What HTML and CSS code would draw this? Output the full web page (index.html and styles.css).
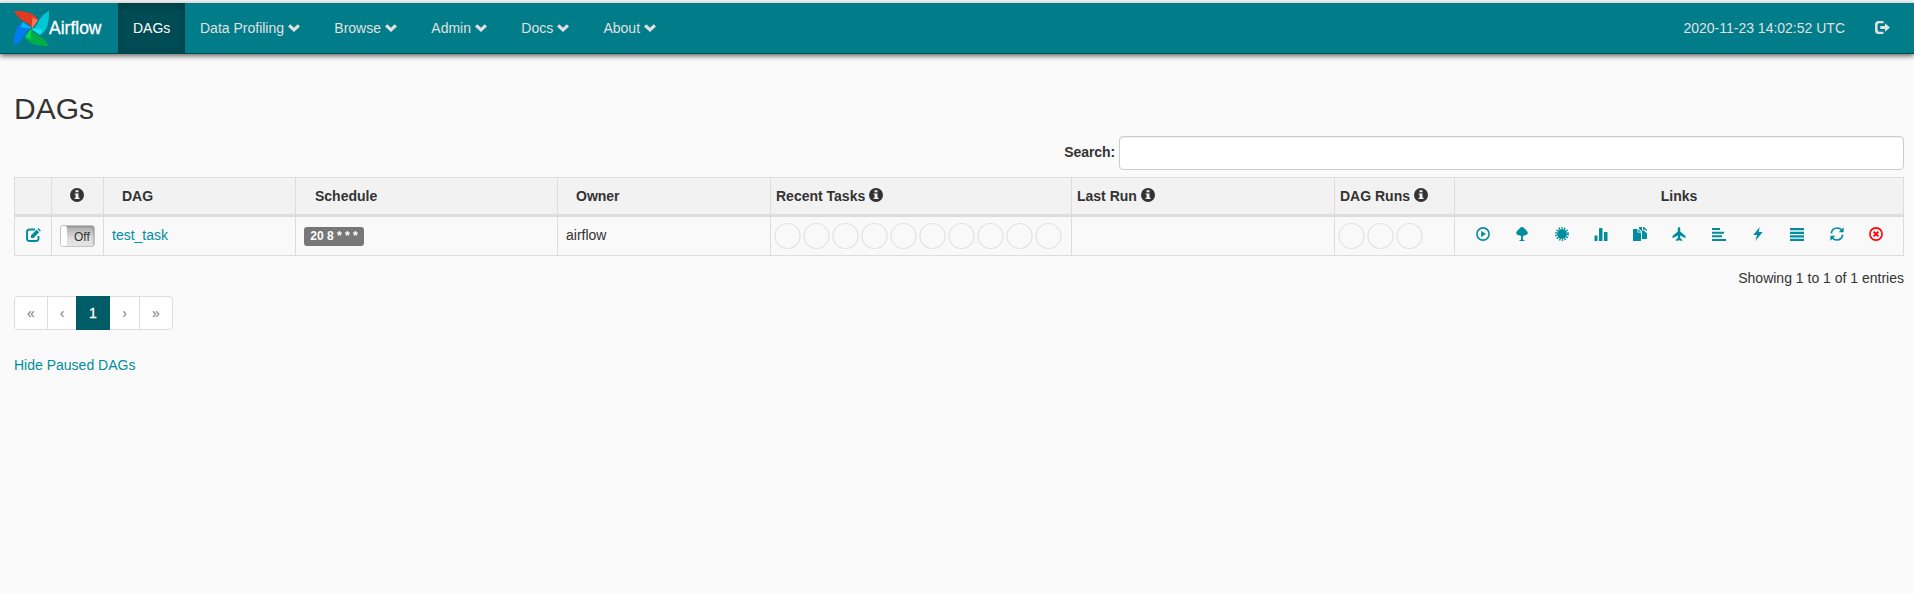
FILE: index.html
```html
<!DOCTYPE html>
<html lang="en">
<head>
<meta charset="utf-8">
<title>Airflow - DAGs</title>
<link rel="stylesheet" href="styles.css">
</head>
<body>
<svg class="defs" width="0" height="0" aria-hidden="true">
  <symbol id="chev" viewBox="0 0 12 8"><path d="M2.300.3 6 3.800 9.700.3 12 2.500 6 8 0 2.500z"/></symbol>
  <symbol id="info" viewBox="0 0 14 14"><path fill-rule="evenodd" d="M7 0a7 7 0 1 1 0 14A7 7 0 0 1 7 0zM5.500 2.200v2h3v-2zM4.600 5.500v1h1v3.300h-1v1.200h5V9.800H8.500V5.500z"/></symbol>
</svg>

<nav class="navbar">
  <a class="brand">
    <svg class="logo" viewBox="0 0 35 35">
      <path fill="#e43921" d="M0 0C9 0 19 0 24 9L18 17.500C16 10 7 13 0 0z"/>
      <path fill="#ff7557" d="M18.500 6.500 24 9 18 17.500C17.300 14.500 18.500 11 18.500 6.500z"/>
      <g transform="rotate(90 17.500 17.500)"><path fill="#00c7d4" d="M0 0C9 0 19 0 24 9L18 17.500C16 10 7 13 0 0z"/><path fill="#11e1ee" d="M18.500 6.500 24 9 18 17.500C17.300 14.500 18.500 11 18.500 6.500z"/></g>
      <g transform="rotate(180 17.500 17.500)"><path fill="#00ad46" d="M0 0C9 0 19 0 24 9L18 17.500C16 10 7 13 0 0z"/><path fill="#04d659" d="M18.500 6.500 24 9 18 17.500C17.300 14.500 18.500 11 18.500 6.500z"/></g>
      <g transform="rotate(270 17.500 17.500)"><path fill="#017cee" d="M0 0C9 0 19 0 24 9L18 17.500C16 10 7 13 0 0z"/><path fill="#0cb6ff" d="M18.500 6.500 24 9 18 17.500C17.300 14.500 18.500 11 18.500 6.500z"/></g>
    </svg>
    <span>Airflow</span>
  </a>
  <ul class="menu">
    <li class="active">DAGs</li>
    <li class="drop">Data Profiling <svg class="chev"><use href="#chev"/></svg></li>
    <li class="drop">Browse <svg class="chev"><use href="#chev"/></svg></li>
    <li class="drop">Admin <svg class="chev"><use href="#chev"/></svg></li>
    <li class="drop">Docs <svg class="chev"><use href="#chev"/></svg></li>
    <li class="drop">About <svg class="chev"><use href="#chev"/></svg></li>
  </ul>
  <div class="clock">2020-11-23 14:02:52 UTC</div>
  <svg class="logout" viewBox="0 0 15 13"><path d="M8.500 0v2.300H4.200Q2.600 2.300 2.600 4v5q0 1.700 1.600 1.700h4.300V13H3.500Q0 13 0 9.500v-6Q0 0 3.500 0zM10 2.300l5 4.200-5 4.200V8H5.300V5H10z"/></svg>
</nav>

<main class="page">
  <h2 class="title">DAGs</h2>
  <label class="search"><span>Search:</span><input type="search"></label>

  <table class="dags">
    <colgroup><col class="c1"><col class="c2"><col class="c3"><col class="c4"><col class="c5"><col class="c6"><col class="c7"><col class="c8"><col class="c9"></colgroup>
    <thead>
      <tr>
        <th></th>
        <th class="center"><svg class="info"><use href="#info"/></svg></th>
        <th class="sort">DAG</th>
        <th class="sort">Schedule</th>
        <th class="sort">Owner</th>
        <th>Recent Tasks <svg class="info"><use href="#info"/></svg></th>
        <th>Last Run <svg class="info"><use href="#info"/></svg></th>
        <th>DAG Runs <svg class="info"><use href="#info"/></svg></th>
        <th class="center">Links</th>
      </tr>
    </thead>
    <tbody>
      <tr>
        <td><svg class="edit" viewBox="0 0 15 14"><path d="M9 1.500H3.500Q1 1.500 1 4v6.500Q1 13 3.500 13H10q2.500 0 2.500-2.500V8" fill="none" stroke="currentColor" stroke-width="1.900"/><path d="M5 10V7.300L10.600 1.700l2.500 2.500L7.600 10zM11.400 1l1-1 2.500 2.500-1 1z"/></svg></td>
        <td><div class="toggle"><span class="knob"></span><span>Off</span></div></td>
        <td><a class="text">test_task</a></td>
        <td><span class="label">20 8 * * *</span></td>
        <td><span class="text">airflow</span></td>
        <td class="dots"><svg width="290" height="28"><circle cx="14.500" cy="14" r="12.500"/><circle cx="43.500" cy="14" r="12.500"/><circle cx="72.500" cy="14" r="12.500"/><circle cx="101.500" cy="14" r="12.500"/><circle cx="130.500" cy="14" r="12.500"/><circle cx="159.500" cy="14" r="12.500"/><circle cx="188.500" cy="14" r="12.500"/><circle cx="217.500" cy="14" r="12.500"/><circle cx="246.500" cy="14" r="12.500"/><circle cx="275.500" cy="14" r="12.500"/></svg></td>
        <td></td>
        <td class="dots"><svg width="86" height="28"><circle cx="14.500" cy="14" r="12.500"/><circle cx="43.500" cy="14" r="12.500"/><circle cx="72.500" cy="14" r="12.500"/></svg></td>
        <td>
          <div class="links">
            <svg viewBox="0 0 14 14"><circle cx="7" cy="7" r="6.100" fill="none" stroke="currentColor" stroke-width="1.600"/><path d="M5.200 4 10 7l-4.800 3z"/></svg>
            <svg viewBox="0 0 14 14"><path d="M7 0c1.600 0 2.600 1 2.600 2.200 1.300 0 2 .8 1.900 1.800C12.600 4.400 13 5.300 12.700 6.300 12.300 7.700 11 8.500 9.500 8.200 9 8.900 8.400 9 7.900 9v3.600l1.600.6v.8h-5v-.8l1.600-.6V9c-.6 0-1.200-.2-1.600-.8C3 8.500 1.700 7.700 1.300 6.300 1 5.300 1.400 4.400 2.500 4c-.1-1 .6-1.800 1.900-1.800C4.400 1 5.400 0 7 0z"/></svg>
            <svg viewBox="0 0 14 14"><circle cx="7" cy="7" r="4.800"/><circle cx="7" cy="7" r="5.700" fill="none" stroke="currentColor" stroke-width="2.600" stroke-dasharray="1.250 1.308"/></svg>
            <svg viewBox="0 0 14 14"><path d="M.5 14V9q0-.5.5-.5h2q.5 0 .5.500v5zM5 14V2q0-1 1-1h1.500q1 0 1 1v12zM10 14V5.500q0-.5.5-.5h2.500q.5 0 .5.500V14z"/></svg>
            <svg viewBox="0 0 14 14"><path d="M0 2h4.500v3.500H8V14H0zM5.300 2 8 4.800H5.300zM6 0h3v3.500h2L14 6.500V12H9V4.500L6 1.500zM10 0h1l3 2.800V4.500l-1.500-1.700H10z"/></svg>
            <svg viewBox="0 0 14 14"><path d="M7 0c.8 0 1.200 1 1.200 2v2.600L13.500 9v2.200L8.200 8.600V11l2 1.700V14L7 13.200 3.800 14v-1.300l2-1.700V8.600L.5 11.200V9l5.300-4.400V2C5.800 1 6.200 0 7 0z"/></svg>
            <svg viewBox="0 0 14 14"><path d="M0 1h8v2H0zM0 4.700h12v2H0zM0 8.300h10v2H0zM0 12h14v2H0z"/></svg>
            <svg viewBox="0 0 14 14"><path d="M8.800 0 7.700 5h4L4.200 14l1.900-6H2.200z"/></svg>
            <svg viewBox="0 0 14 14"><path d="M0 1h14v2.200H0zM0 4.700h14v2.200H0zM0 8.300h14v2.200H0zM0 11.800h14V14H0z"/></svg>
            <svg viewBox="0 0 14 14"><path d="M1.300 6.300C1.800 3 4.200 1 7.200 1c2 0 3.400.8 4.500 2M12.700 7.700c-.5 3.300-2.900 5.300-5.900 5.300-2 0-3.400-.8-4.500-2" fill="none" stroke="currentColor" stroke-width="1.700"/><path d="M13.600.3v5H8.700zM.4 13.700v-5h4.900z"/></svg>
            <svg class="danger" viewBox="0 0 14 14"><circle cx="7" cy="7" r="6.100" fill="none" stroke="currentColor" stroke-width="1.600"/><path d="M4.600 4.600l4.800 4.800M9.400 4.600 4.600 9.400" stroke="currentColor" stroke-width="1.900"/></svg>
          </div>
        </td>
      </tr>
    </tbody>
  </table>

  <div class="summary">Showing 1 to 1 of 1 entries</div>
  <ul class="pager"><li class="p1">«</li><li class="p2">‹</li><li class="current">1</li><li class="p3">›</li><li class="p4">»</li></ul>
  <a class="hide">Hide Paused DAGs</a>
</main>
</body>
</html>
```
FILE: styles.css
```css
* { box-sizing: border-box; }
body {
  margin: 0;
  padding-top: 2px;
  background: #fafafa;
  color: #333;
  font: 14px/20px "Liberation Sans", Arial, sans-serif;
}
svg { fill: currentColor; }
.defs { position: absolute; }
a { color: #018d9d; }

.navbar {
  display: flex;
  height: 52px;
  background: #017c89;
  border-top: 1px solid #ddd;
  border-bottom: 1px solid #00474e;
  box-shadow: 0 2px 5px rgba(0, 0, 0, .6);
  color: #e0e0e0;
}
.brand {
  display: flex;
  width: 118px;
  padding: 8px 0 0 14px;
  color: #fff;
  font-size: 17.5px;
}
.brand span { padding-top: 7px; -webkit-text-stroke: .3px #fff; }
.logo { flex: none; width: 35px; height: 35px; }
.menu { display: flex; margin: 0; padding: 0; list-style: none; }
.menu li { padding: 15px; white-space: nowrap; }
.menu .drop { padding-right: 19.4px; }
.menu .active {
  width: 67px;
  background: #004c54;
  color: #fff;
  box-shadow: inset 0 3px 9px rgba(0, 0, 0, .2);
}
.chev { width: 12px; height: 8px; vertical-align: 1px; }
.clock { margin-left: auto; padding-top: 15px; }
.logout { width: 15px; height: 13px; margin: 18px 24px 0 30px; }

.page { padding: 0 10px 0 14px; }
.title { margin: 38px 0 0; font-size: 30px; line-height: 33px; font-weight: 400; }
.search {
  display: flex;
  justify-content: flex-end;
  gap: 4px;
  margin-top: 11px;
  font-weight: 700;
  line-height: 33px;
}
.search span { letter-spacing: -.1px; }
.search input {
  width: 785px;
  height: 34px;
  margin: 0;
  border: 1px solid #ccc;
  border-radius: 4px;
  background: #fff;
  box-shadow: inset 0 1px 1px rgba(0, 0, 0, .075);
}

.dags {
  width: 1890px;
  margin-top: 7px;
  table-layout: fixed;
  border-collapse: separate;
  border-spacing: 0;
  border: solid #ddd;
  border-width: 1px 0 0 1px;
}
.c1 { width: 37px; }
.c2 { width: 52px; }
.c3 { width: 192px; }
.c4 { width: 262px; }
.c5 { width: 213px; }
.c6 { width: 301px; }
.c7 { width: 263px; }
.c8 { width: 120px; }
.c9 { width: 449px; }
.dags th {
  height: 39px;
  padding: 0 5px;
  border: solid #ddd;
  border-width: 0 1px 3px 0;
  background: #f2f2f2;
  text-align: left;
}
.dags th.sort { padding-left: 18px; }
.dags th.sort:nth-child(4) { padding-left: 19px; }
.dags th.center { text-align: center; }
.dags th:nth-child(2) { padding: 0 6px 0 4px; }
.dags td {
  height: 39px;
  padding: 0 8px;
  border: solid #ddd;
  border-width: 0 1px 1px 0;
  background: #f9f9f9;
}
.text { display: block; margin-top: -2px; }
.info { width: 14px; height: 14px; vertical-align: -1px; }
.edit { display: block; width: 15px; height: 14px; margin: -3px 0 0 3px; color: #018d9d; }
.toggle {
  display: flex;
  width: 35px;
  height: 22px;
  border: 1px solid #c4c4c4;
  border-radius: 3px;
  background: linear-gradient(#aaa, #ddd 60%, #e6e6e6);
  box-shadow: inset -1px 1px 2px rgba(0, 0, 0, .2);
  font-size: 12px;
  line-height: 22px;
}
.knob { width: 6px; margin-right: 7px; border-radius: 2px; background: #fff; }
.label {
  display: block;
  width: 60px;
  height: 19px;
  border-radius: 3px;
  background: #777;
  color: #fff;
  font-size: 12px;
  font-weight: 700;
  line-height: 18px;
  text-align: center;
}
.dags .dots { padding: 0 0 0 2px; }
.dots svg { display: block; fill: none; stroke: #e2e2e2; stroke-width: 1.2px; }
.links {
  display: flex;
  justify-content: space-between;
  margin: -4px 12px 0;
  padding-left: 1px;
  color: #018d9d;
}
.links svg { width: 14px; height: 14px; }
.links .danger { color: #f00; }

.summary { margin-top: 12px; text-align: right; }
.pager {
  display: flex;
  width: 159px;
  height: 34px;
  margin: 8px 0 0;
  padding: 0;
  border: 1px solid #ddd;
  border-radius: 4px;
  background: #fff;
  color: #777;
  line-height: 32px;
  text-align: center;
  list-style: none;
}
.p1 { width: 33px; border-right: 1px solid #ddd; }
.p2 { width: 28px; }
.p3 { width: 30px; border-right: 1px solid #ddd; }
.p4 { width: 32px; }
.current {
  width: 34px;
  height: 34px;
  margin-top: -1px;
  background: #005c66;
  color: #fff;
  line-height: 34px;
  -webkit-text-stroke: .3px #fff;
}
.hide { display: block; margin-top: 25px; }
```
